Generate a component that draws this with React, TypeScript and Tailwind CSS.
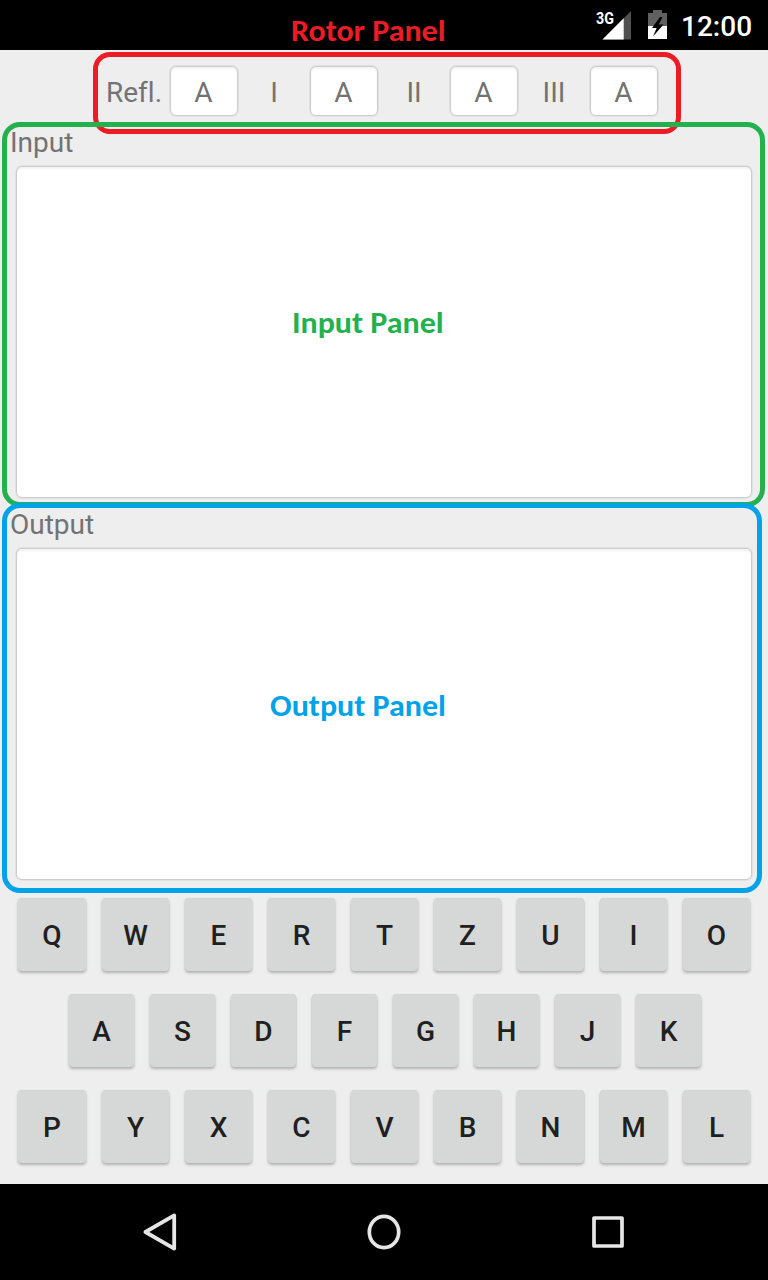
const rotors = [
  { label: "Refl.", value: "A" },
  { label: "I", value: "A" },
  { label: "II", value: "A" },
  { label: "III", value: "A" },
];

function StatusBar() {
  return (
    <header className="relative flex h-[50px] shrink-0 items-start justify-end bg-black pr-[17px] text-white">
      <span className="mt-[9px] mr-[-16px] origin-left scale-x-[0.84] text-[17px] leading-[18px] font-bold">3G</span>
      <svg className="mt-[10px] h-[30px] w-[30px]" viewBox="0 0 30 30">
        <path d="M30 1V29.5H1.5Z" fill="#505050" />
        <path d="M22.7 8.3V29.5H1.5Z" fill="#fff" />
      </svg>
      <svg className="mt-[10px] ml-[17px] h-[30px] w-[20px]" viewBox="0 0 20 30">
        <path d="M5 0h9v3h5v26H0V3h5z" fill="#606060" />
        <path d="M0 16h19v13H0z" fill="#fff" />
        <path d="M12 7L4 18h4.7L5 26.5L15.5 14.5h-4.7L14.5 7z" fill="#000" />
      </svg>
      <span className="mt-[10px] ml-[13px] w-[70px] text-[28px] leading-[33px] font-medium">12:00</span>
      <span className="absolute top-[13px] left-[291px] origin-left scale-x-[1.032] font-['Carlito','Lato',sans-serif] text-[31px] leading-[35px] font-bold whitespace-nowrap text-[#ed1c24]">Rotor Panel</span>
    </header>
  );
}

function RotorRow() {
  return (
    <section className="flex h-[76px] shrink-0 items-start pt-4 pl-[99px] [font-variant-ligatures:none]">
      {rotors.map((rotor) => (
        <div key={rotor.label} className="flex w-[140px] items-start">
          <span className="w-[70px] text-center leading-[53px]">{rotor.label}</span>
          <div className="mx-px h-[50px] w-[68px] rounded-[6px] border border-[#cccccc] bg-white pr-px text-center leading-[51px] shadow-[0_0_1px_1px_rgba(0,0,0,0.05),inset_0_2px_2px_#f2f2f2]">{rotor.value}</div>
        </div>
      ))}
    </section>
  );
}

function TextPanel({ label, caption, captionClass }: { label: string; caption: string; captionClass: string }) {
  return (
    <section className="flex h-[382px] shrink-0 flex-col px-4">
      <span className="-ml-[6px] h-[40px] leading-[33px]">{label}</span>
      <div className="relative h-[332px] rounded-[6px] border border-[#cccccc] bg-white shadow-[0_0_1px_1px_rgba(0,0,0,0.05),inset_0_2px_2px_#f4f4f4]">
        <span className={captionClass}>{caption}</span>
      </div>
    </section>
  );
}

function KeyRow({ letters, keyClass, rowClass }: { letters: string; keyClass: string; rowClass: string }) {
  return (
    <div className={rowClass}>
      {letters.split("").map((letter) => (
        <button
          key={letter}
          className={`h-[73px] shrink-0 rounded-[4px] bg-[#d6d8d7] pt-px text-center text-[28px] leading-[73px] font-medium text-[#202020] shadow-[0_2px_3px_rgba(0,0,0,0.25),0_0_1px_rgba(0,0,0,0.12)] ${keyClass}`}
        >
          {letter}
        </button>
      ))}
    </div>
  );
}

function NavigationBar() {
  return (
    <nav className="grid h-[96px] shrink-0 grid-cols-[272px_224px_272px] items-center bg-black">
      <svg className="ml-[140px] h-[40px] w-[40px]" viewBox="0 0 40 40" fill="none" stroke="#e6e6e6" strokeWidth="3.8" strokeLinejoin="round">
        <path d="M5.4 20L34.2 3.4V36.6Z" />
      </svg>
      <svg className="mx-auto h-[40px] w-[40px]" viewBox="0 0 40 40" fill="none" stroke="#e6e6e6" strokeWidth="3.7">
        <ellipse cx="20" cy="20" rx="14.7" ry="15.7" />
      </svg>
      <svg className="ml-[92px] h-[40px] w-[40px]" viewBox="0 0 40 40" fill="none" stroke="#e6e6e6" strokeWidth="3.7" strokeLinejoin="round">
        <path d="M6 6H34V34H6Z" />
      </svg>
    </nav>
  );
}

export default function App() {
  return (
    <main className="relative flex h-[1280px] w-[768px] flex-col overflow-hidden bg-[#eeeeee] font-['Roboto',sans-serif] text-[28px] text-[#737373]">
      <StatusBar />
      <RotorRow />
      <TextPanel
        label="Input"
        caption="Input Panel"
        captionClass="absolute top-[138px] left-[275px] origin-left scale-x-[1.032] whitespace-nowrap font-['Carlito','Lato',sans-serif] text-[31px] leading-[35px] font-bold text-[#22b14c]"
      />
      <TextPanel
        label="Output"
        caption="Output Panel"
        captionClass="absolute top-[139px] left-[253px] origin-left scale-x-[1.032] whitespace-nowrap font-['Carlito','Lato',sans-serif] text-[31px] leading-[35px] font-bold text-[#00a2e8]"
      />
      <section className="flex flex-1 flex-col gap-[23px] pt-[8px]">
        <KeyRow letters="QWERTZUIO" rowClass="flex justify-end gap-[16px] pr-[18px]" keyClass="w-[67px] first:w-[68px]" />
        <KeyRow letters="ASDFGHJK" rowClass="flex justify-end gap-[16px] pr-[67px]" keyClass="w-[65px]" />
        <KeyRow letters="PYXCVBNML" rowClass="flex justify-end gap-[16px] pr-[18px]" keyClass="w-[67px] first:w-[68px]" />
      </section>
      <NavigationBar />
      <div className="pointer-events-none absolute top-[52px] left-[93px] h-[82px] w-[588px] rounded-[17px] border-[5px] border-[#ed1c24]" />
      <div className="pointer-events-none absolute top-[122px] left-[2px] h-[385px] w-[763px] rounded-[18px] border-[5px] border-[#22b14c]" />
      <div className="pointer-events-none absolute top-[503px] left-[2px] h-[390px] w-[760px] rounded-[18px] border-[5px] border-[#00a2e8]" />
    </main>
  );
}
